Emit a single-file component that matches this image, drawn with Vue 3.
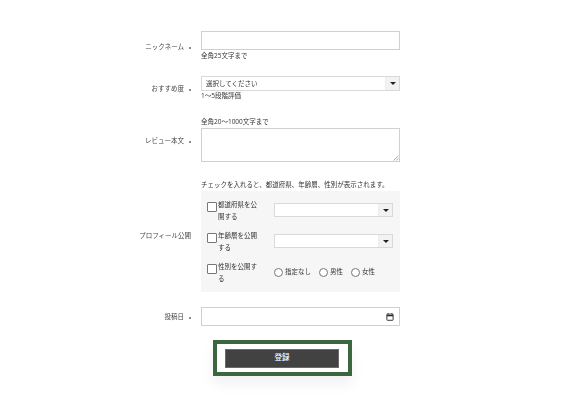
<script setup>
const profileRows = [
  { id: 'pref', label: '都道府県を公開する', kind: 'select' },
  { id: 'age', label: '年齢層を公開する', kind: 'select' },
  { id: 'sex', label: '性別を公開する', kind: 'radio' }
]
const genders = ['指定なし', '男性', '女性']
</script>

<template>
  <form class="review-form" @submit.prevent>
    <div class="row">
      <div class="row__label">ニックネーム<span class="req"></span></div>
      <div class="row__body">
        <div class="input input--nick"></div>
        <p class="hint hint--after">全角25文字まで</p>
      </div>
    </div>

    <div class="row row--rate">
      <div class="row__label">おすすめ度<span class="req"></span></div>
      <div class="row__body">
        <div class="select select--rate">
          <span class="select__text">選択してください</span>
          <span class="select__arrow"><i></i></span>
        </div>
        <p class="hint">1〜5段階評価</p>
      </div>
    </div>

    <div class="row row--text">
      <div class="row__label row__label--text">レビュー本文<span class="req"></span></div>
      <div class="row__body">
        <p class="hint hint--before">全角20〜1000文字まで</p>
        <div class="input input--area">
          <svg class="grip" width="6" height="6" viewBox="0 0 6 6">
            <path d="M0.5 5.5 5.5 0.5M3.2 5.5 5.5 3.2" stroke="#8a8a8a" stroke-width="0.7" fill="none" />
          </svg>
        </div>
      </div>
    </div>

    <div class="row row--profile">
      <div class="row__label row__label--profile">プロフィール公開</div>
      <div class="row__body row__body--profile">
        <p class="hint hint--before">チェックを入れると、都道府県、年齢層、性別が表示されます。</p>
        <div class="panel">
          <div v-for="r in profileRows" :key="r.id" class="panel__row">
            <div class="check">
              <span class="check__box"></span>
              <span class="check__text">{{ r.label }}</span>
            </div>
            <div v-if="r.kind === 'select'" class="select select--panel">
              <span class="select__text"></span>
              <span class="select__arrow"><i></i></span>
            </div>
            <div v-else class="radios">
              <label v-for="g in genders" :key="g" class="radio"><span class="radio__dot"></span>{{ g }}</label>
            </div>
          </div>
        </div>
      </div>
    </div>

    <div class="row row--date">
      <div class="row__label">投稿日<span class="req"></span></div>
      <div class="row__body">
        <div class="input input--date">
          <svg width="8" height="8" viewBox="0 0 9 9">
            <path d="M2.3 0.3v1.4M6.7 0.3v1.4" stroke="#222" stroke-width="1" />
            <rect x="1" y="1.2" width="7" height="7" rx="0.6" fill="none" stroke="#222" stroke-width="1" />
            <path d="M1 3h7" stroke="#222" stroke-width="1.4" />
          </svg>
        </div>
      </div>
    </div>

    <div class="actions">
      <div class="actions__frame">
        <button class="submit" type="submit">登録</button>
      </div>
    </div>
  </form>
</template>

<style>
body {
  background: #fff;
}
</style>

<style scoped>
.review-form {
  width: 562px;
  height: 400px;
  box-sizing: border-box;
  padding-top: 31px;
  font-family: "Open Sans", "Noto Sans CJK JP", sans-serif;
  font-size: 6.5px;
  line-height: 10px;
  color: #333;
  filter: blur(0.5px);
  overflow: hidden;
}

.row {
  display: flex;
  align-items: center;
}

.row--rate {
  margin-top: 15px;
}

.row--text {
  margin-top: 16px;
}

.row--profile {
  margin-top: 18px;
}

.row--date {
  margin-top: 15px;
}

.row__label {
  width: 192px;
  flex: none;
  display: flex;
  justify-content: flex-end;
  align-items: center;
  padding-top: 1px;
  box-sizing: border-box;
  color: #444;
}

.row__label--text {
  padding-top: 3px;
}

.row__label--profile {
  width: 191px;
  padding-top: 0;
}

.row__body {
  width: 199px;
  margin-left: 9px;
}

.row__body--profile {
  margin-left: 10px;
}

.req {
  width: 2px;
  height: 2px;
  border-radius: 50%;
  background: #666;
  margin-left: 5px;
  margin-right: 1px;
  margin-top: 2px;
}

.hint {
  margin: 0;
  color: #333;
}

.hint--after {
  margin-top: 1px;
}

.hint--before {
  margin-bottom: 1px;
  white-space: nowrap;
}

.input {
  box-sizing: border-box;
  border: 1px solid #d0d0d0;
  background: #fff;
  width: 199px;
}

.input--nick {
  height: 19px;
}

.input--area {
  height: 34px;
  position: relative;
}

.grip {
  position: absolute;
  right: 0;
  bottom: 0;
}

.input--date {
  height: 19px;
  display: flex;
  align-items: center;
  justify-content: flex-end;
  padding-right: 5px;
}

.select {
  box-sizing: border-box;
  display: flex;
  align-items: stretch;
  border: 1px solid #d9d9d9;
  background: #fff;
}

.select--rate {
  width: 199px;
  height: 15px;
}

.select--panel {
  width: 119px;
  height: 14px;
  margin-bottom: 2px;
}

.select__text {
  flex: 1;
  padding-left: 4px;
  line-height: 13px;
  color: #333;
}

.select__arrow {
  width: 13px;
  background: #f2f2f2;
  border-left: 1px solid #ececec;
  display: flex;
  align-items: center;
  justify-content: center;
}

.select__arrow i {
  width: 0;
  height: 0;
  border-left: 3px solid transparent;
  border-right: 3px solid transparent;
  border-top: 3px solid #222;
}

.panel {
  background: #f6f6f6;
  height: 101px;
  box-sizing: border-box;
  padding: 8px 7px 0 6px;
  display: flex;
  flex-direction: column;
  gap: 7px;
}

.panel__row {
  display: flex;
  align-items: center;
  height: 24px;
}

.check {
  width: 67px;
  flex: none;
  position: relative;
  box-sizing: border-box;
  padding: 0 11px;
  line-height: 12px;
  color: #333;
}

.check__box {
  position: absolute;
  left: 0;
  top: 3px;
  width: 8px;
  height: 8px;
  border: 1px solid #777;
  background: #fff;
  border-radius: 1px;
}

.check__text {
  display: block;
}

.radios {
  display: flex;
  gap: 8px;
  white-space: nowrap;
  margin-bottom: 2px;
}

.radio {
  display: flex;
  align-items: center;
  gap: 2px;
}

.radio__dot {
  width: 7px;
  height: 7px;
  border: 1px solid #777;
  border-radius: 50%;
  background: #fff;
}

.actions {
  display: flex;
  justify-content: center;
  margin-top: 14px;
  padding-left: 2px;
}

.actions__frame {
  box-sizing: border-box;
  width: 139px;
  height: 36px;
  border: 4px solid #3c6640;
  background: #fff;
  box-shadow: 0 8px 14px rgba(0, 0, 0, 0.06);
  display: flex;
  justify-content: center;
  align-items: center;
}

.submit {
  width: 114px;
  height: 19px;
  border: 1px solid #6a6a6a;
  background: #424242;
  color: #fff;
  font-family: inherit;
  font-size: 7.5px;
  font-weight: 500;
  line-height: 1;
  padding: 0;
}
</style>
